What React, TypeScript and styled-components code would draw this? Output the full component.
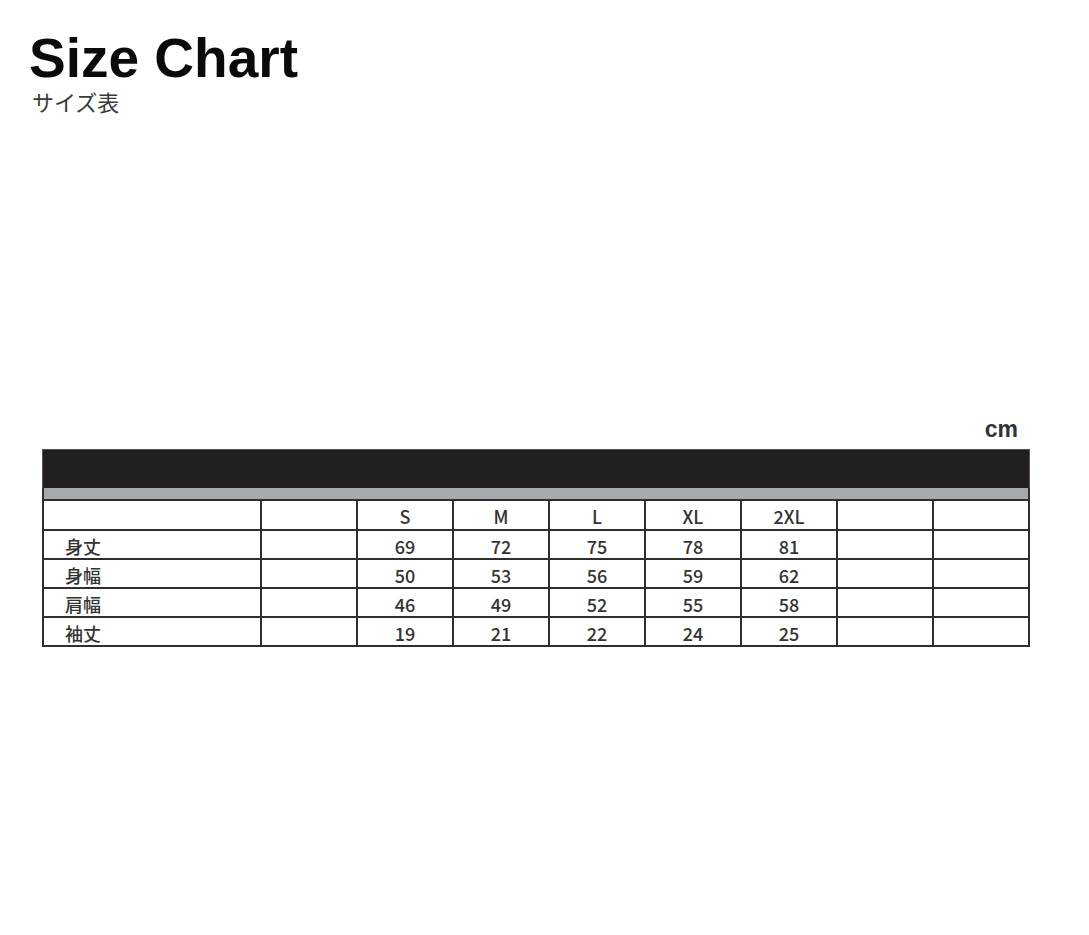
import React from "react";
import styled, { createGlobalStyle } from "styled-components";

const GlobalStyle = createGlobalStyle`
  html, body { margin: 0; padding: 0; background: #fff; }
  body { font-family: "Liberation Sans", Arial, sans-serif; }
`;

const Page = styled.div`
  width: 1089px;
  min-height: 935px;
  box-sizing: border-box;
  padding: 32px 0 0 0;
  position: relative;
`;

const Header = styled.header`
  padding-left: 29px;
  display: flex;
  flex-direction: column;
`;

const Title = styled.h1`
  margin: 0;
  font-family: "Liberation Sans", Arial, sans-serif;
  font-weight: 700;
  font-size: 55px;
  line-height: 52px;
  color: #0a0a0a;
`;

const Subtitle = styled.div`
  margin-top: 6px;
  padding-left: 3px;
  font-family: "Noto Sans CJK JP", sans-serif;
  font-weight: 400;
  font-size: 22px;
  line-height: 22px;
  color: #3a3a3a;
`;

const ChartArea = styled.section`
  margin-top: 304px;
  margin-left: 42px;
  width: 988px;
  display: flex;
  flex-direction: column;
`;

const Unit = styled.div`
  align-self: flex-end;
  margin-right: 12px;
  font-family: "Liberation Sans", Arial, sans-serif;
  font-weight: 700;
  font-size: 23px;
  line-height: 26px;
  color: #333;
  margin-bottom: 7px;
`;

const BlackBand = styled.div`
  height: 39px;
  background: #231f20;
  border: 1px solid #555;
  border-bottom: none;
  box-sizing: border-box;
`;

const GrayBand = styled.div`
  height: 11px;
  background: #a7a9ac;
  border-left: 2px solid #333;
  border-right: 2px solid #333;
  box-sizing: border-box;
`;

const Grid = styled.div`
  display: grid;
  grid-template-columns: 216px repeat(8, 94px);
  grid-template-rows: 28px;
  grid-auto-rows: 27px;
  gap: 2px;
  padding: 2px;
  background: #2e2e2e;
`;

const Cell = styled.div<{ $label?: boolean }>`
  background: #fff;
  display: flex;
  align-items: center;
  justify-content: ${(p) => (p.$label ? "flex-start" : "center")};
  padding-left: ${(p) => (p.$label ? "21px" : "0")};
  font-family: "Noto Sans CJK JP", sans-serif;
  font-weight: 500;
  font-size: 18px;
  color: #333;
  line-height: 1;
  padding-top: 2px;
`;

const sizes = ["S", "M", "L", "XL", "2XL"];
const rows: [string, number[]][] = [
  ["身丈", [69, 72, 75, 78, 81]],
  ["身幅", [50, 53, 56, 59, 62]],
  ["肩幅", [46, 49, 52, 55, 58]],
  ["袖丈", [19, 21, 22, 24, 25]],
];

export default function App() {
  return (
    <Page>
      <GlobalStyle />
      <Header>
        <Title>Size Chart</Title>
        <Subtitle>サイズ表</Subtitle>
      </Header>
      <ChartArea>
        <Unit>cm</Unit>
        <BlackBand />
        <GrayBand />
        <Grid>
          <Cell $label />
          <Cell />
          {sizes.map((s) => (
            <Cell key={s}>{s}</Cell>
          ))}
          <Cell />
          <Cell />
          {rows.map(([label, vals]) => (
            <React.Fragment key={label}>
              <Cell $label>{label}</Cell>
              <Cell />
              {vals.map((v, i) => (
                <Cell key={i}>{v}</Cell>
              ))}
              <Cell />
              <Cell />
            </React.Fragment>
          ))}
        </Grid>
      </ChartArea>
    </Page>
  );
}
